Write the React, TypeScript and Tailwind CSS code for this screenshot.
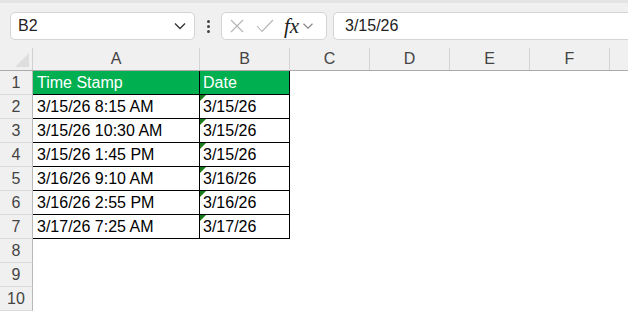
import React from "react";

const cols = [
  { l: "A", w: 167 },
  { l: "B", w: 90 },
  { l: "C", w: 80 },
  { l: "D", w: 80 },
  { l: "E", w: 80 },
  { l: "F", w: 80 },
  { l: "", w: 40 },
];

const data: [string, string][] = [
  ["3/15/26 8:15 AM", "3/15/26"],
  ["3/15/26 10:30 AM", "3/15/26"],
  ["3/15/26 1:45 PM", "3/15/26"],
  ["3/16/26 9:10 AM", "3/16/26"],
  ["3/16/26 2:55 PM", "3/16/26"],
  ["3/17/26 7:25 AM", "3/17/26"],
];

function Chevron({ className = "" }: { className?: string }) {
  return (
    <svg className={className} width="12" height="8" viewBox="0 0 12 8" fill="none">
      <path d="M1 1.5 L6 6.5 L11 1.5" stroke="currentColor" strokeWidth="1.3" />
    </svg>
  );
}

function RowHead({ n }: { n: number }) {
  return (
    <div className="w-[33px] h-[24px] shrink-0 flex items-center justify-center border-b border-[#dcdcdc] border-r border-r-[#b8b8b8] text-[16px] text-[#444] bg-[#f0f0f0]">
      {n}
    </div>
  );
}

export default function App() {
  return (
    <div
      className="w-[628px] h-[311px] overflow-hidden bg-[#f0f0f0] flex flex-col"
      style={{ fontFamily: '"Liberation Sans", Arial, sans-serif' }}
    >
      <div className="h-[3px] bg-[#e4e4e4] shrink-0" />
      <div className="h-[45px] shrink-0 flex items-center pl-[10px] pt-[1px]">
        <div className="w-[185px] h-[28px] bg-white border border-[#d4d4d4] rounded-[5px] flex items-center pl-[7px] pr-[8px] justify-between">
          <span className="text-[16px] text-[#222]">B2</span>
          <Chevron className="text-[#333]" />
        </div>
        <div className="w-[26px] flex flex-col items-center gap-[2px]">
          <div className="w-[3px] h-[3px] bg-[#444] rounded-full" />
          <div className="w-[3px] h-[3px] bg-[#444] rounded-full" />
          <div className="w-[3px] h-[3px] bg-[#444] rounded-full" />
        </div>
        <div className="w-[106px] h-[28px] bg-white border border-[#d4d4d4] rounded-[5px] flex items-center pl-[7px]">
          <svg width="16" height="16" viewBox="0 0 16 16" fill="none">
            <path d="M2 2 L14 14 M14 2 L2 14" stroke="#b4b4b4" strokeWidth="1.1" />
          </svg>
          <svg className="ml-[11px]" width="18" height="14" viewBox="0 0 18 14" fill="none">
            <path d="M1 7 L6 12.5 L17 1" stroke="#b4b4b4" strokeWidth="1.1" />
          </svg>
          <span
            className="ml-[10px] text-[21px] italic text-[#222] leading-none"
            style={{ fontFamily: '"Liberation Serif", "Times New Roman", serif' }}
          >
            fx
          </span>
          <Chevron className="ml-[3px] text-[#888] scale-90" />
        </div>
        <div className="ml-[6px] flex-1 h-[28px] bg-white border border-[#d4d4d4] border-r-0 rounded-l-[5px] flex items-center pl-[11px]">
          <span className="text-[16px] text-[#222]">3/15/26</span>
        </div>
      </div>
      {/* column header */}
      <div className="h-[23px] shrink-0 flex border-b border-[#ababab]">
        <div className="w-[33px] shrink-0 relative border-r border-[#d0d0d0]">
          <svg className="absolute right-[3px] bottom-[3px]" width="14" height="14" viewBox="0 0 14 14">
            <path d="M14 0 L14 14 L0 14 Z" fill="#dedede" />
          </svg>
        </div>
        {cols.map((c, i) => (
          <div
            key={i}
            className="shrink-0 flex items-center justify-center border-r border-[#d4d4d4] text-[16px] text-[#444]"
            style={{ width: c.w }}
          >
            {c.l}
          </div>
        ))}
      </div>
      {/* row 1 */}
      <div className="flex shrink-0">
        <RowHead n={1} />
        <div className="w-[167px] h-[24px] shrink-0 bg-[#00b050] border-b border-r border-black text-white text-[16px] flex items-center pl-[4px]">
          Time Stamp
        </div>
        <div className="w-[90px] h-[24px] shrink-0 bg-[#00b050] border-b border-r border-black text-white text-[16px] flex items-center pl-[3px]">
          Date
        </div>
        <div className="flex-1 bg-white" />
      </div>
      {data.map((r, i) => (
        <div key={i} className="flex shrink-0">
          <RowHead n={i + 2} />
          <div className="w-[167px] h-[24px] shrink-0 bg-white border-b border-r border-black text-black text-[16px] flex items-center pl-[4px]">
            {r[0]}
          </div>
          <div className="relative w-[90px] h-[24px] shrink-0 bg-white border-b border-r border-black text-black text-[16px] flex items-center pl-[3px]">
            <svg className="absolute left-0 top-0" width="6" height="6" viewBox="0 0 6 6">
              <path d="M0 0 L6 0 L0 6 Z" fill="#1b7a1b" />
            </svg>
            {r[1]}
          </div>
          <div className="flex-1 bg-white" />
        </div>
      ))}
      {[8, 9, 10].map((n) => (
        <div key={n} className="flex shrink-0">
          <RowHead n={n} />
          <div className="flex-1 bg-white h-[24px]" />
        </div>
      ))}
    </div>
  );
}
